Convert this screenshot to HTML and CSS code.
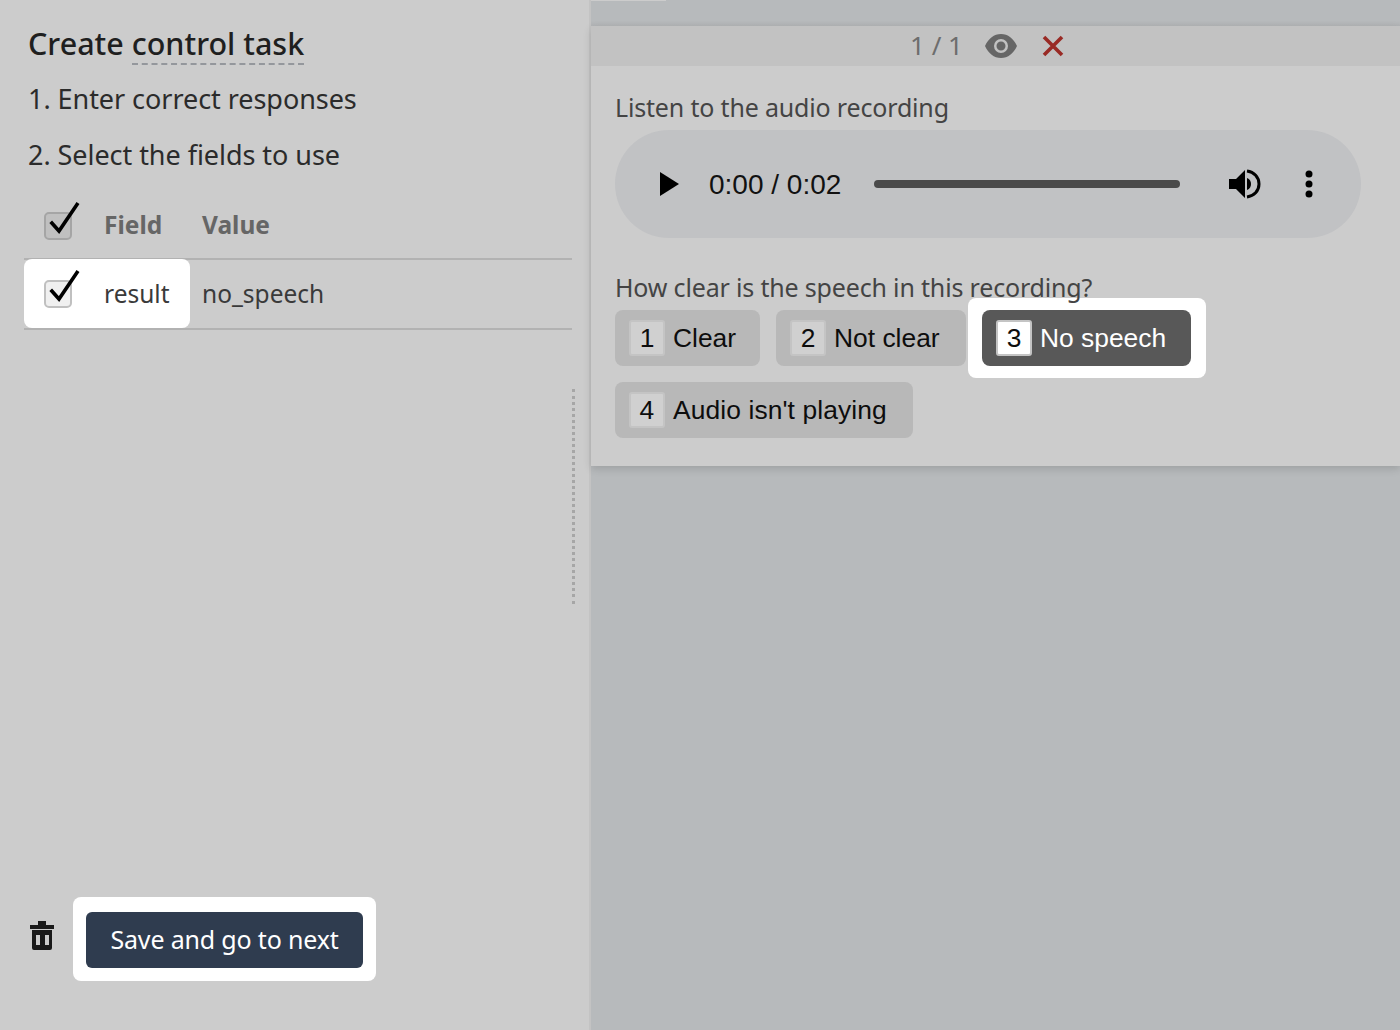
FILE: index.html
```html
<!DOCTYPE html>
<html lang="en">
<head>
<meta charset="utf-8">
<title>Create control task</title>
<link rel="stylesheet" href="styles.css">
</head>
<body>
<div class="app">
  <aside class="left">
    <h1 class="title">Create <span class="dashed">control task</span></h1>
    <p class="step step-first">1. Enter correct responses</p>
    <p class="step step-second">2. Select the fields to use</p>
    <div class="table">
      <div class="row head">
        <div class="cell-check">
          <span class="box box-dim"></span>
          <svg class="tick tick-head" viewBox="0 0 36 36"><path d="M4.700 20.700L13 30 32 2" fill="none" stroke="#000" stroke-width="3.600"/></svg>
          <span class="name">Field</span>
        </div>
        <div class="cell-val">Value</div>
      </div>
      <div class="row body-row">
        <div class="cell-check hl">
          <span class="box"></span>
          <svg class="tick" viewBox="0 0 36 36"><path d="M4.700 20.700L13 30 32 2" fill="none" stroke="#000" stroke-width="3.600"/></svg>
          <span class="name">result</span>
        </div>
        <div class="cell-val">no_speech</div>
      </div>
    </div>
    <div class="grip"></div>
    <div class="footer">
      <svg class="trash" viewBox="0 0 24 29"><path fill="#1a1a1a" fill-rule="evenodd" d="M8 0h8v4h8v4H0V4h8zM2 9h20v18a2 2 0 0 1-2 2H4a2 2 0 0 1-2-2zM6 14v10h4V14zM15 14v10h4V14z"/></svg>
      <div class="save-hl"><button class="save">Save and go to next</button></div>
    </div>
  </aside>
  <main class="right">
    <div class="topline"></div>
    <section class="card">
      <header class="bar">
        <span class="count">1 / 1</span>
        <svg class="eye" viewBox="0 0 32 24"><path fill="#666" fill-rule="evenodd" d="M16 0C9 0 3.500 4.500 0 12c3.500 7.500 9 12 16 12s12.500-4.500 16-12C28.500 4.500 23 0 16 0zm0 5a7 7 0 1 1 0 14 7 7 0 0 1 0-14zm0 2.500a4.500 4.500 0 1 0 0 9 4.500 4.500 0 0 0 0-9z"/></svg>
        <svg class="close" viewBox="0 0 22 22"><path d="M2 2l18 18M20 2L2 20" stroke="#992a25" stroke-width="3.600" fill="none"/></svg>
      </header>
      <div class="content">
        <p class="label">Listen to the audio recording</p>
        <div class="player">
          <svg class="play" viewBox="0 0 19 24"><path d="M0 0l19 12L0 24z"/></svg>
          <span class="time">0:00 / 0:02</span>
          <span class="track"></span>
          <svg class="vol" viewBox="0 0 32 30"><path d="M0 10h7l9-9v28l-9-9H0z"/><path d="M18 9c3 1 4 3.500 4 6s-1 5-4 6z"/><path d="M18 2c7 1 12 6 12 13s-5 12-12 13" fill="none" stroke="#000" stroke-width="3"/></svg>
          <svg class="more" viewBox="0 0 8 28"><circle cx="4" cy="4" r="3.500"/><circle cx="4" cy="14" r="3.500"/><circle cx="4" cy="24" r="3.500"/></svg>
        </div>
        <p class="label label-q">How clear is the speech in this recording?</p>
        <div class="options">
          <button class="opt opt-clear"><span class="key">1</span>Clear</button>
          <button class="opt opt-not"><span class="key">2</span>Not clear</button>
          <button class="opt opt-none active"><span class="key">3</span>No speech</button>
          <button class="opt opt-audio"><span class="key">4</span>Audio isn't playing</button>
        </div>
      </div>
    </section>
  </main>
</div>
</body>
</html>
```
FILE: styles.css
```css
* { box-sizing: border-box; }
html, body { margin: 0; height: 100%; }
body { font-family: "Noto Sans", "Open Sans", sans-serif; background: #b7babc; overflow: hidden; }
.app { display: flex; height: 1030px; }

.left {
  width: 591px; flex: none; background: #cccccc; border-right: 2px solid #c3c3c3;
  display: flex; flex-direction: column; position: relative; padding: 23px 17px 0 24px;
}
.title { margin: 0 0 0 4px; font-size: 30.500px; line-height: 40px; font-weight: 500; color: #1f1f1f; }
.dashed { display: inline-block; border-bottom: 2px dashed #94979c; margin-bottom: -2px; }
.step { margin: 0 0 0 4px; font-size: 27px; line-height: 36px; color: #2b2b2b; letter-spacing: -0.05px; }
.step-first { margin-top: 18px; }
.step-second { margin-top: 20px; }

.table { margin-top: 17px; }
.row { display: flex; align-items: stretch; border-bottom: 2px solid #b2b2b2; height: 70px; }
.head { font-weight: 700; color: #666; }
.body-row { color: #3a3a3a; }
.body-row .cell-val { padding-bottom: 2px; }
.cell-check { width: 166px; position: relative; display: flex; align-items: center; font-size: 24.500px; }
.cell-val { display: flex; align-items: center; padding-left: 12px; font-size: 24.500px; }
.hl { background: #fff; border-radius: 8px; margin-top: -1px; padding-bottom: 1px; }
.box { position: absolute; left: 20px; top: 21px; width: 28px; height: 28px; border: 2px solid #c0c0c0; border-radius: 5px; background: #f0f0f0; }
.box-dim { top: 22px; background: #c0c0c0; border-color: #a5a5a5; }
.tick { position: absolute; left: 22px; top: 10px; width: 36px; height: 36px; }
.head .tick-head { top: 11px; }
.name { margin-left: 80px; }

.grip { position: absolute; left: 572px; top: 389px; height: 215px; border-left: 3px dotted #a6a6a6; }

.footer { margin-top: auto; margin-bottom: 49px; display: flex; align-items: center; padding-left: 6px; }
.trash { width: 24px; height: 29px; margin-right: 19px; margin-top: -7px; }
.save-hl { background: #fff; border-radius: 8px; padding: 15px 13px 13px; }
.save { display: block; width: 277px; height: 56px; border: 0; border-radius: 6px; background: #2f3c4f; color: #fff; font: 25px/1.2 "Noto Sans", sans-serif; padding: 0 0 2px; letter-spacing: -0.17px; }

.right { flex: 1; display: flex; flex-direction: column; min-width: 0; position: relative; }
.topline { height: 26px; background: linear-gradient(#b7babc 80%, #b2b4b6); }
.topline::before { content: ""; display: block; width: 75px; height: 1px; background: #cccccc; }
.card { background: #cccccc; box-shadow: 0 3px 8px rgba(0, 0, 0, .14); }
.bar { height: 40px; background: #c2c2c2; display: flex; align-items: center; padding-left: 319px; }
.count { font-size: 26px; line-height: 36px; padding-bottom: 2px; color: #6d6d6d; width: 75px; }
.eye { width: 32px; height: 24px; }
.close { width: 22px; height: 22px; margin-left: 25px; }
.content { padding: 23px 24px 28px; height: 400px; }
.label { margin: 0; font-size: 25px; line-height: 36px; color: #444; letter-spacing: -0.17px; position: relative; z-index: 2; }
.player { margin-top: 5px; width: 746px; height: 108px; border-radius: 54px; background: #c1c2c4; display: flex; align-items: center; position: relative; }
.play { width: 19px; height: 24px; margin-left: 45px; flex: none; }
.time { font: 28px "Liberation Sans", Arial, sans-serif; line-height: 36px; padding-top: 2px; color: #111; margin-left: 30px; width: 165px; flex: none; }
.track { width: 306px; height: 8px; background: #4a4a4a; border-radius: 4px; flex: none; }
.vol { width: 32px; height: 30px; margin-left: 49px; flex: none; }
.more { width: 8px; height: 28px; margin-left: 44px; flex: none; }
.label-q { margin-top: 31px; }
.options { margin-top: 5px; display: flex; flex-wrap: wrap; gap: 16px; width: 620px; }
.opt {
  position: relative; height: 56px; border: 0; border-radius: 8px; background: #b8b8b8; color: #0d0d0d;
  font: 26.400px "Liberation Sans", Arial, sans-serif; padding: 0 0 0 14px; display: flex; align-items: center;
}
.opt-clear { width: 145px; }
.opt-not { width: 190px; }
.opt-none { width: 209px; }
.opt-audio { width: 298px; letter-spacing: .1px; }
.key { width: 36px; height: 36px; border: 2px solid #c4c4c4; border-radius: 3px; background: #d0d0d0; display: flex; align-items: center; justify-content: center; margin-right: 8px; flex: none; }
.active { background: #585858; color: #fff; z-index: 1; }
.active::before { content: ""; position: absolute; inset: -12px -15px -12px -14px; background: #fff; border-radius: 8px; z-index: -1; }
.active::after { content: ""; position: absolute; inset: 0; background: #585858; border-radius: 8px; z-index: -1; }
.active .key { background: #fff; color: #0d0d0d; border-color: #c4c4c4; }
```
